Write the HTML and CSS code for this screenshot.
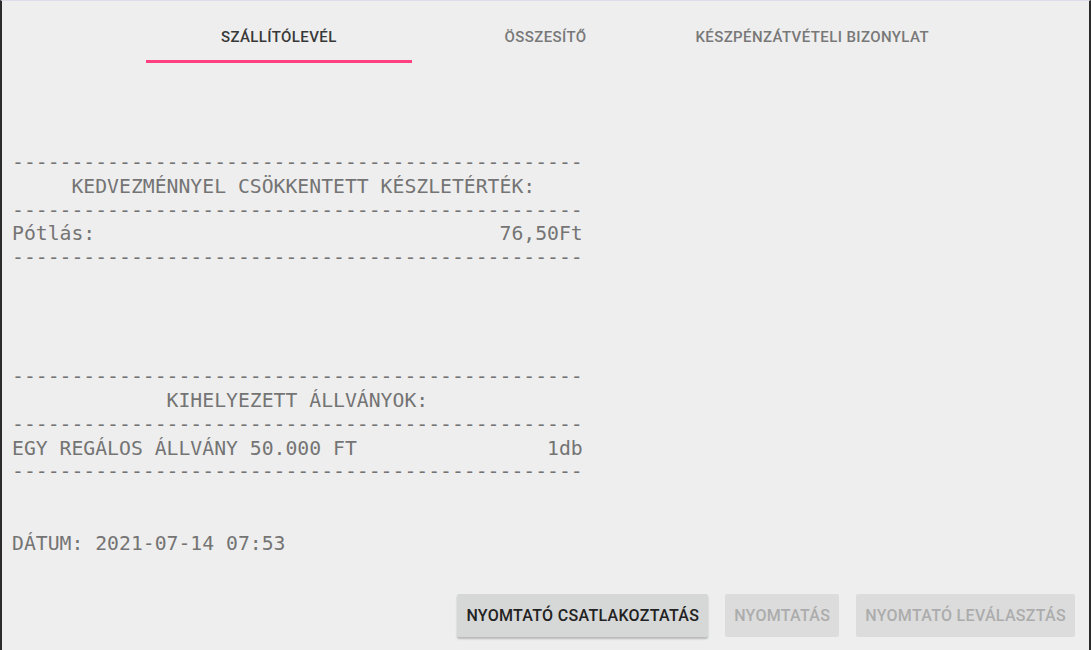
FILE: index.html
```html
<!DOCTYPE html>
<html lang="hu">
<head>
<meta charset="utf-8">
<title>Szállítólevél</title>
<link rel="stylesheet" href="styles.css">
</head>
<body>
<div class="frame">
  <nav class="tabs">
    <div class="tab active">SZÁLLÍTÓLEVÉL</div>
    <div class="tab">ÖSSZESÍTŐ</div>
    <div class="tab">KÉSZPÉNZÁTVÉTELI BIZONYLAT</div>
  </nav>
  <main class="content">
<pre class="receipt">------------------------------------------------
     KEDVEZMÉNNYEL CSÖKKENTETT KÉSZLETÉRTÉK:
------------------------------------------------
Pótlás:                                  76,50Ft
------------------------------------------------




------------------------------------------------
             KIHELYEZETT ÁLLVÁNYOK:
------------------------------------------------
EGY REGÁLOS ÁLLVÁNY 50.000 FT                1db
------------------------------------------------


DÁTUM: 2021-07-14 07:53</pre>
  </main>
  <div class="actions">
    <button class="btn">NYOMTATÓ CSATLAKOZTATÁS</button>
    <button class="btn disabled">NYOMTATÁS</button>
    <button class="btn disabled">NYOMTATÓ LEVÁLASZTÁS</button>
  </div>
</div>
</body>
</html>
```

FILE: styles.css
```css
html, body {
  margin: 0;
  padding: 0;
  background: #eeeeee;
}

.frame {
  width: 1091px;
  height: 650px;
  box-sizing: border-box;
  border-left: 2px solid #2b2b2b;
  border-right: 2px solid #2b2b2b;
  border-top: 1px solid #dcdde8;
  display: flex;
  flex-direction: column;
  overflow: hidden;
}

.tabs {
  width: 800px;
  margin: 0 auto;
  display: flex;
  font-family: Roboto, "Noto Sans", sans-serif;
  font-weight: 500;
  font-size: 15px;
  letter-spacing: 0.4px;
}

.tab {
  flex: 1;
  height: 46px;
  padding-top: 13px;
  border-bottom: 3px solid transparent;
  display: flex;
  align-items: center;
  justify-content: center;
  color: #787878;
}

.tab.active {
  color: #383838;
  border-bottom-color: #ff4081;
}

.content {
  flex: 1;
  padding-left: 10px;
}

.receipt {
  margin: 88px 0 0 0;
  font-family: "DejaVu Sans Mono", monospace;
  font-size: 19.75px;
  line-height: 23.8px;
  color: #747474;
}

.actions {
  display: flex;
  justify-content: flex-end;
  gap: 17px;
  padding: 0 14px 13px 0;
}

.btn {
  height: 43px;
  padding: 0 9px;
  border: none;
  border-radius: 2px;
  background: #d6d7d7;
  font-family: Roboto, "Noto Sans", sans-serif;
  font-weight: 500;
  font-size: 16px;
  letter-spacing: 0.3px;
  color: #222222;
  box-shadow: 0 2px 2px rgba(0, 0, 0, 0.22);
}

.btn.disabled {
  background: #dcdcdc;
  color: #acacac;
  box-shadow: none;
}
```
